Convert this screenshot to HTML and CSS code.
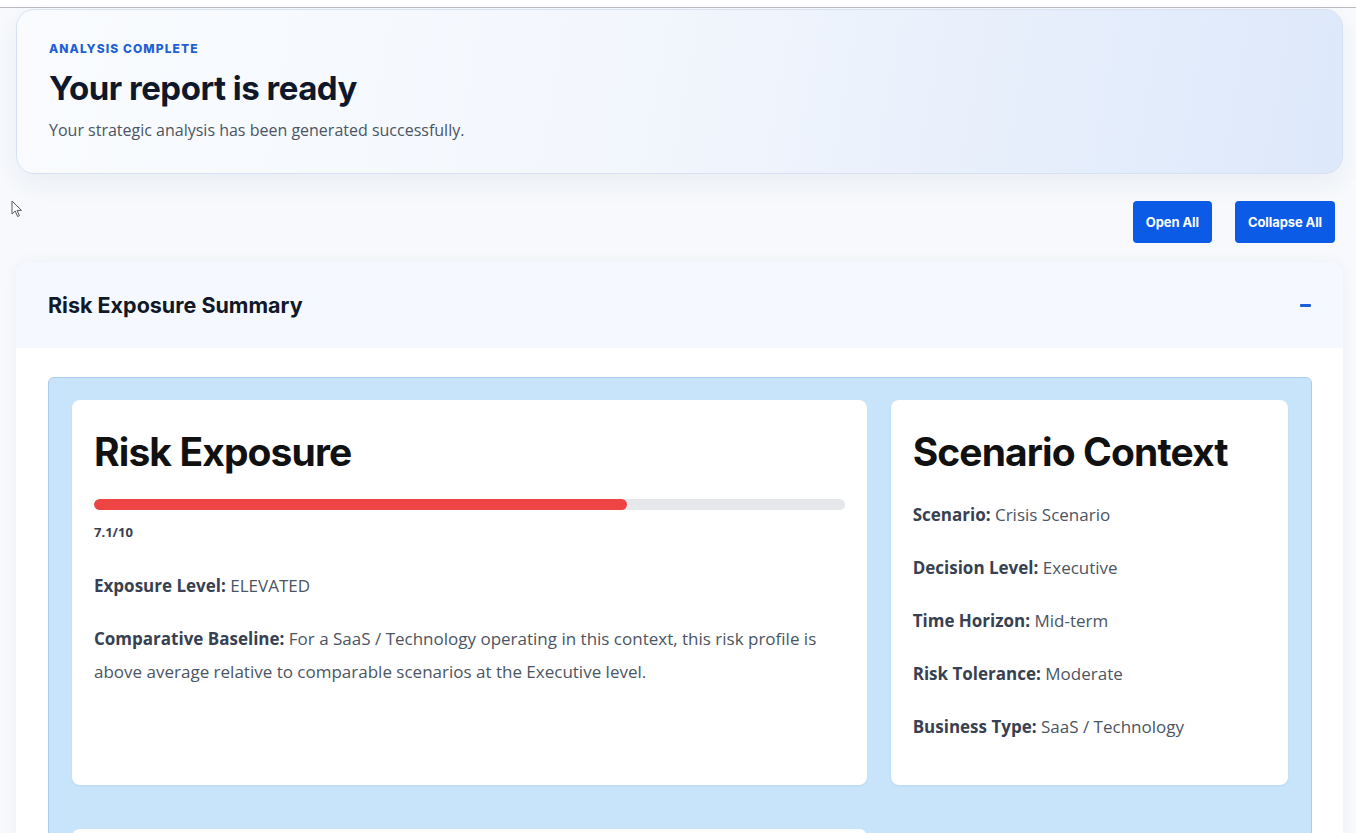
FILE: index.html
```html
<!DOCTYPE html>
<html lang="en">
  <head>
    <title>Strategic Report</title>
    <meta charset="utf-8">
    <link rel="stylesheet" href="styles.css">
  </head>
  <body>

  <div class="topline"></div>

  <svg class="pointer" width="12" height="18" viewBox="0 0 12 18">
    <path d="M1 1 L1 14 L4.2 11 L6.6 16.5 L8.4 15.7 L6.1 10.4 L10.5 10.4 Z" fill="#ffffff" stroke="#555a60" stroke-width="1" stroke-linejoin="round"/>
  </svg>

  <main class="page">

    <header class="hero">
      <div class="eyebrow">Analysis Complete</div>
      <h1>Your report is ready</h1>
      <p class="lead">Your strategic analysis has been generated successfully.</p>
    </header>

    <div class="toolbar">
      <button class="btn">Open All</button>
      <button class="btn">Collapse All</button>
    </div>

    <section class="panel">
      <div class="panel-head">
        <h2>Risk Exposure Summary</h2>
        <span class="toggle"></span>
      </div>
      <div class="panel-body">
        <div class="board">

          <article class="card">
            <h3>Risk Exposure</h3>
            <div class="meter"><div class="meter-fill" style="width: 71%"></div></div>
            <div class="score">7.1/10</div>
            <p><strong>Exposure Level:</strong> ELEVATED</p>
            <p><strong>Comparative Baseline:</strong> For a SaaS / Technology operating in this context, this risk profile is above average relative to comparable scenarios at the Executive level.</p>
          </article>

          <article class="card">
            <h3>Scenario Context</h3>
            <p><strong>Scenario:</strong> Crisis Scenario</p>
            <p><strong>Decision Level:</strong> Executive</p>
            <p><strong>Time Horizon:</strong> Mid-term</p>
            <p><strong>Risk Tolerance:</strong> Moderate</p>
            <p><strong>Business Type:</strong> SaaS / Technology</p>
          </article>

          <article class="card card-next"></article>

        </div>
      </div>
    </section>

  </main>

  </body>
</html>
```

FILE: styles.css
```css
html {
  height: 100%;
}
body {
  margin: 0;
  padding: 0;
  background: #f7f9fc;
  color: #111827;
  font-family: "Open Sans", sans-serif;
  font-size: 16px;
  height: 100%;
  overflow: hidden;
}

.topline {
  height: 7px;
  background: #ffffff;
  border-bottom: 1px solid #b9bcc2;
}

.pointer {
  position: absolute;
  left: 11px;
  top: 200px;
}

.page {
  padding: 1px 13px 0 16px;
}

.hero {
  height: 165px;
  box-sizing: border-box;
  padding: 31px 32px 0;
  border: 1px solid #d6e2f3;
  border-radius: 18px;
  background: linear-gradient(100deg, #f9fbfe 0%, #f3f7fd 45%, #dde8fa 100%);
  box-shadow: 0 10px 24px rgba(30, 60, 110, 0.06);
}

.eyebrow {
  font-family: "Inter", sans-serif;
  font-size: 12px;
  font-weight: 800;
  letter-spacing: 1.1px;
  text-transform: uppercase;
  color: #1d5fd6;
  line-height: 16px;
}

.hero h1 {
  margin: 7px 0 0;
  font-family: "Inter", sans-serif;
  font-size: 33px;
  font-weight: 700;
  letter-spacing: -0.5px;
  line-height: 48px;
  color: #0f172a;
}

.lead {
  margin: 7px 0 0;
  font-size: 16px;
  color: #4b5563;
}

.toolbar {
  display: flex;
  justify-content: flex-end;
  gap: 23px;
  padding: 27px 8px 19px 0;
}

.btn {
  height: 42px;
  padding: 0 13px;
  border: 0;
  border-radius: 4px;
  background: #0b5be6;
  color: #ffffff;
  font-family: "Inter", sans-serif;
  font-size: 13px;
  font-weight: 700;
  letter-spacing: -0.1px;
  cursor: pointer;
}

.panel {
  background: #ffffff;
  border-radius: 14px 14px 0 0;
  box-shadow: 0 0 14px rgba(30, 60, 110, 0.05);
}

.panel-head {
  height: 86px;
  display: flex;
  align-items: center;
  justify-content: space-between;
  padding: 0 32px;
  background: #f5f9ff;
  border-radius: 14px 14px 0 0;
}

.panel-head h2 {
  margin: 0;
  font-family: "Inter", sans-serif;
  font-size: 21.5px;
  font-weight: 700;
  color: #111827;
}

.toggle {
  width: 11px;
  height: 3px;
  background: #1d5fd6;
  border-radius: 1px;
}

.panel-body {
  padding: 29px 31px 0 32px;
}

.board {
  display: grid;
  grid-template-columns: 2fr 1fr;
  column-gap: 24px;
  row-gap: 44px;
  padding: 22px 23px 23px;
  background: #c7e4fb;
  border: 1px solid #a9cdee;
  border-radius: 6px;
}

.card {
  background: #ffffff;
  border-radius: 8px;
  padding: 27px 22px 22px;
  box-shadow: 0 1px 2px rgba(30, 60, 110, 0.08);
}

.card h3 {
  margin: 0 0 21px;
  font-family: "Inter", sans-serif;
  font-size: 39px;
  font-weight: 700;
  letter-spacing: -0.9px;
  line-height: 50px;
  color: #111111;
}

.card p {
  margin: 0 0 20px;
  font-size: 17px;
  line-height: 33px;
  color: #4b5563;
}

.card p strong {
  color: #374151;
}

.meter {
  height: 11px;
  margin-top: 22px;
  border-radius: 6px;
  background: #e5e7eb;
  overflow: hidden;
}

.meter-fill {
  height: 100%;
  border-radius: 6px;
  background: #ef4444;
}

.score {
  margin: 13px 0 28px;
  font-size: 13px;
  font-weight: 700;
  color: #374151;
}

.card-next {
  height: 120px;
}
```
